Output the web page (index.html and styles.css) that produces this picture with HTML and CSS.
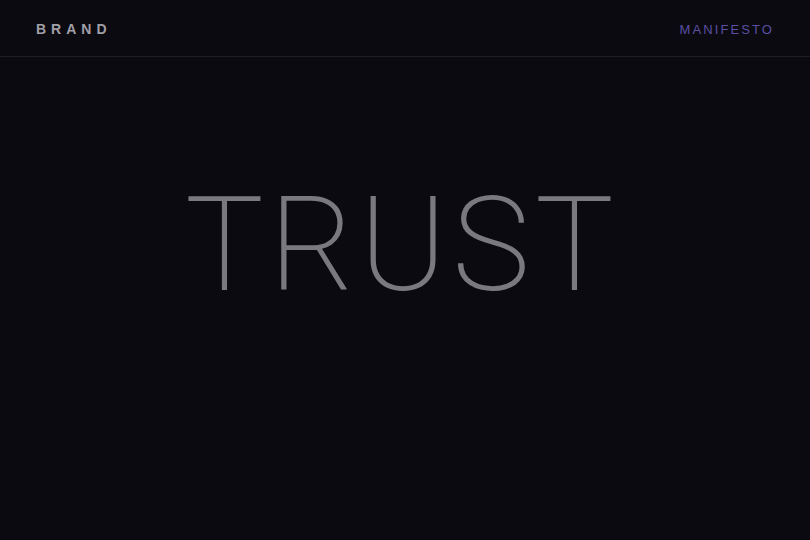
FILE: index.html
```html
<!DOCTYPE html>
<html lang="en">
<head>
<meta charset="utf-8">
<title>Trust</title>
<link rel="stylesheet" href="styles.css">
</head>
<body>
<header class="topbar">
  <div class="brand">BRAND</div>
  <a class="nav-link" href="#">MANIFESTO</a>
</header>
<main class="hero">
  <h1 class="word">TRUST</h1>
</main>
</body>
</html>
```
FILE: styles.css
```css
html, body {
  margin: 0;
  padding: 0;
  height: 100%;
  background: #0b0a10;
}
body {
  font-family: "Liberation Sans", Arial, sans-serif;
  overflow: hidden;
}
.topbar {
  height: 57px;
  box-sizing: border-box;
  border-bottom: 1px solid #1f1e25;
  display: flex;
  align-items: center;
  justify-content: space-between;
  padding: 2px 36px 0 36px;
}
.brand {
  font-weight: 700;
  font-size: 14px;
  letter-spacing: 5px;
  color: #a09fa6;
}
.nav-link {
  font-size: 13px;
  letter-spacing: 2.1px;
  color: #5a4fa3;
  text-decoration: none;
}
.hero {
  display: flex;
  justify-content: center;
  padding-top: 122px;
}
.word {
  margin: 0 0 0 -6px;
  font-family: Roboto, "Liberation Sans", sans-serif;
  font-weight: 200;
  font-size: 132px;
  line-height: 1;
  letter-spacing: 5px;
  color: #7a797e;
}
```
